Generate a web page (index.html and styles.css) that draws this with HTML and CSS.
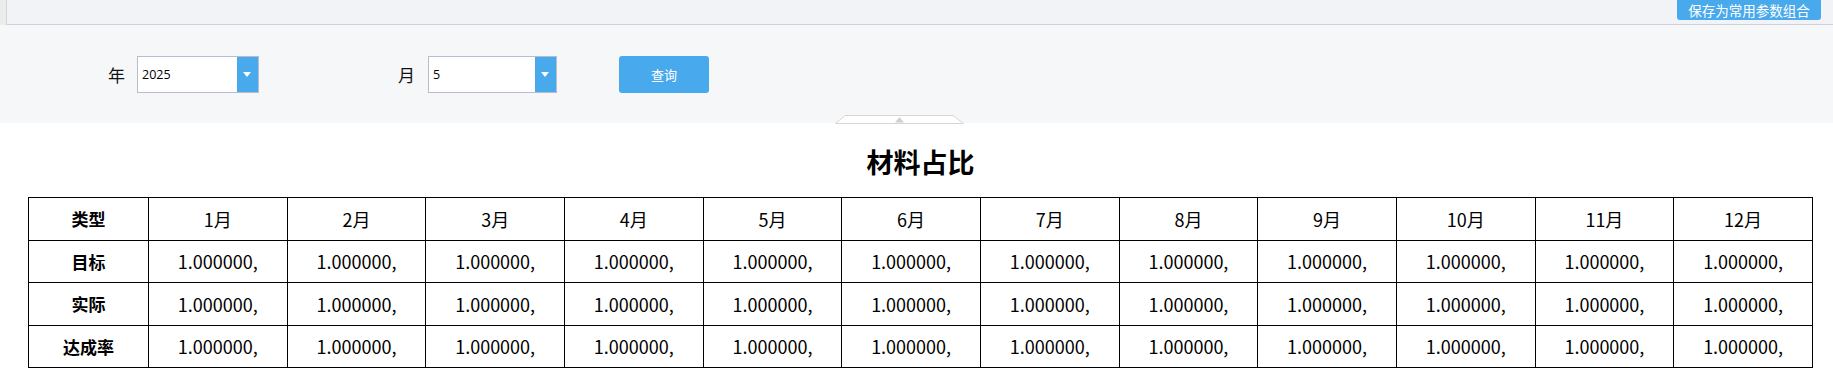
FILE: index.html
```html
<!DOCTYPE html>
<html lang="zh-CN">
<head>
<meta charset="utf-8">
<title>材料占比</title>
<link rel="stylesheet" href="styles.css">
</head>
<body>
<div class="topbar">
  <div class="topbar-strip"></div>
  <button class="save-btn">保存为常用参数组合</button>
</div>
<div class="filter">
  <div class="filter-row">
    <span class="lbl lbl-year">年</span>
    <div class="sel sel-year"><span class="sel-val">2025</span><span class="sel-arrow"></span></div>
    <span class="lbl lbl-month">月</span>
    <div class="sel sel-month"><span class="sel-val">5</span><span class="sel-arrow"></span></div>
    <button class="query-btn">查询</button>
  </div>
  <svg class="collapse-tab" width="130" height="9" viewBox="0 0 130 9">
    <path d="M0.5 8.5 L10 0.5 L118 0.5 L128.5 8.5 Z" fill="#ffffff" stroke="#d6d6d6" stroke-width="1"/>
    <path d="M60 7.5 L64.5 2 L69 7.5 Z" fill="#d0d0d0"/>
  </svg>
</div>
<div class="content">
  <h1 class="title">材料占比</h1>
  <table class="grid">
    <colgroup>
      <col class="col-type">
      <col><col><col><col><col><col><col><col><col><col><col><col>
    </colgroup>
    <thead>
      <tr>
        <th>类型</th>
        <td>1月</td><td>2月</td><td>3月</td><td>4月</td><td>5月</td><td>6月</td>
        <td>7月</td><td>8月</td><td>9月</td><td>10月</td><td>11月</td><td>12月</td>
      </tr>
    </thead>
    <tbody>
      <tr>
        <th>目标</th>
        <td>1.000000,</td><td>1.000000,</td><td>1.000000,</td><td>1.000000,</td><td>1.000000,</td><td>1.000000,</td>
        <td>1.000000,</td><td>1.000000,</td><td>1.000000,</td><td>1.000000,</td><td>1.000000,</td><td>1.000000,</td>
      </tr>
      <tr>
        <th>实际</th>
        <td>1.000000,</td><td>1.000000,</td><td>1.000000,</td><td>1.000000,</td><td>1.000000,</td><td>1.000000,</td>
        <td>1.000000,</td><td>1.000000,</td><td>1.000000,</td><td>1.000000,</td><td>1.000000,</td><td>1.000000,</td>
      </tr>
      <tr>
        <th>达成率</th>
        <td>1.000000,</td><td>1.000000,</td><td>1.000000,</td><td>1.000000,</td><td>1.000000,</td><td>1.000000,</td>
        <td>1.000000,</td><td>1.000000,</td><td>1.000000,</td><td>1.000000,</td><td>1.000000,</td><td>1.000000,</td>
      </tr>
    </tbody>
  </table>
</div>
</body>
</html>
```

FILE: styles.css
```css
* { box-sizing: border-box; }
html, body {
  margin: 0;
  padding: 0;
  background: #ffffff;
  font-family: "Noto Sans CJK SC", "Noto Sans", sans-serif;
  color: #000;
}

.topbar {
  position: relative;
  height: 25px;
  background: #f2f3f7;
  border-bottom: 1px solid #d0d2d8;
  display: flex;
  justify-content: flex-end;
  align-items: flex-start;
  padding-right: 12px;
}
.topbar-strip {
  position: absolute;
  left: 0;
  top: 0;
  width: 7px;
  height: 25px;
  background: #ececec;
  border-right: 1px solid #d6d6d6;
}
.save-btn {
  height: 20px;
  width: 144px;
  padding: 0;
  border: none;
  border-radius: 0 0 3px 3px;
  background: #48a9ec;
  color: #fff;
  font-family: "Noto Sans CJK SC", sans-serif;
  font-size: 13.5px;
  line-height: 20px;
  text-align: center;
}

.filter {
  position: relative;
  height: 98px;
  background: #f6f7f9;
  padding-top: 31px;
}
.filter-row {
  display: flex;
  align-items: center;
  padding-left: 108px;
  height: 37px;
}
.lbl {
  font-size: 17px;
  line-height: 20px;
  color: #111;
}
.lbl-year { margin-right: 12px; }
.lbl-month { margin-left: 139px; margin-right: 13px; }
.sel {
  display: flex;
  height: 37px;
  border: 1px solid #b8bccc;
  background: #fff;
}
.sel-year { width: 122px; }
.sel-month { width: 129px; }
.sel-val {
  flex: 1;
  font-family: "Open Sans", "Noto Sans", sans-serif;
  font-size: 12.5px;
  line-height: 35px;
  padding-left: 4px;
  color: #000;
}
.sel-arrow {
  position: relative;
  width: 21px;
  background: #48a9ec;
}
.sel-arrow::after {
  content: "";
  position: absolute;
  left: 6px;
  top: 15px;
  border-left: 4.5px solid transparent;
  border-right: 4.5px solid transparent;
  border-top: 5px solid #fff;
}
.query-btn {
  margin-left: 62px;
  width: 90px;
  height: 37px;
  border: none;
  border-radius: 3px;
  background: #48a9ec;
  color: #fff;
  font-family: "Noto Sans CJK SC", sans-serif;
  font-size: 13px;
  padding: 0;
}
.collapse-tab {
  position: absolute;
  left: 835px;
  bottom: -1px;
}

.content {
  padding: 20px 20px 0 28px;
}
.title {
  margin: 0 0 17px 0;
  text-align: center;
  font-size: 27px;
  line-height: 37px;
  font-weight: bold;
}
.grid {
  width: 100%;
  table-layout: fixed;
  border-collapse: collapse;
}
.col-type { width: 120px; }
.grid th, .grid td {
  border: 1px solid #000;
  height: 42.5px;
  padding: 0;
  text-align: center;
  font-size: 18px;
  font-weight: normal;
  color: #000;
}
.grid th {
  font-weight: bold;
  font-size: 17px;
}
```
